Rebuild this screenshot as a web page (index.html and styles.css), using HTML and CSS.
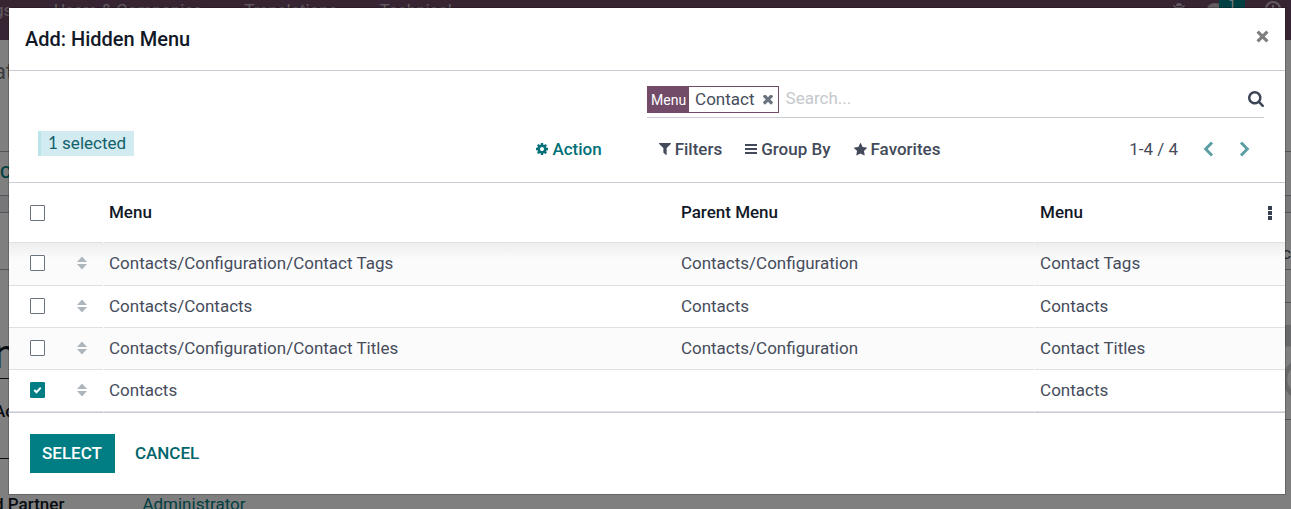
FILE: index.html
```html
<!DOCTYPE html>
<html lang="en">
<head>
<meta charset="utf-8">
<title>Add: Hidden Menu</title>
<link rel="stylesheet" href="styles.css">
</head>
<body>
<svg class="defs" aria-hidden="true">
  <symbol id="sort" viewBox="0 0 10 14"><path d="M5 0.500L10 6H0zM5 13.500L0 8H10z"/></symbol>
</svg>

<div class="page" aria-hidden="true">
  <div class="navbar">
    <span class="nav-brand">gs</span>
    <span class="nav-item">Users &amp; Companies</span>
    <span class="nav-item">Translations</span>
    <span class="nav-item">Technical</span>
    <span class="systray">
      <svg class="nav-icon" viewBox="0 0 16 16"><path d="M5 5a3 3 0 0 1 6 0zM2 5l3 3H11l3-3-1-1-2 2H5L3 4zM4 8h8v4a4 4 0 0 1-8 0z"/></svg>
      <span class="chat"><svg class="nav-icon" viewBox="0 0 16 16"><ellipse cx="8" cy="8" rx="8" ry="6"/></svg><span class="count">1</span></span>
      <svg class="nav-icon ring" viewBox="0 0 16 16"><circle cx="8" cy="8" r="7"/><path d="M8 4v4h3"/></svg>
    </span>
  </div>
  <div class="crumb">at</div>
  <div class="toolbar">C</div>
  <div class="band"></div>
  <div class="statusbar"><span>c</span></div>
  <div class="record">
    <div class="fields">
      <div class="record-name">n</div>
      <div class="field-label">Ac</div>
      <div class="partner"><b>d Partner</b><span>Administrator</span></div>
    </div>
    <div class="avatar">
      <svg viewBox="0 0 40 117"><path d="M0 22h40v22H0z"/><circle cx="52" cy="77" r="18"/></svg>
    </div>
  </div>
</div>

<div class="backdrop">
  <div class="modal" role="dialog" aria-modal="true" aria-labelledby="title">
    <header class="modal-header">
      <h1 id="title">Add: Hidden Menu</h1>
      <button class="icon-btn close" aria-label="Close"><svg viewBox="0 0 12 12"><path d="M1.500 1.500l9 9M10.500 1.500l-9 9"/></svg></button>
    </header>

    <div class="control-panel">
      <div class="search">
        <span class="facet">
          <span class="facet-label">Menu</span>
          <span class="facet-value">Contact</span>
          <button class="icon-btn remove" aria-label="Remove"><svg viewBox="300 470 1192 1108"><path d="M1490 1322q0 40-28 68l-136 136q-28 28-68 28t-68-28l-294-294-294 294q-28 28-68 28t-68-28l-136-136q-28-28-28-68t28-68l294-294-294-294q-28-28-28-68t28-68l136-136q28-28 68-28t68 28l294 294 294-294q28-28 68-28t68 28l136 136q28 28 28 68t-28 68l-294 294 294 294q28 28 28 68z"/></svg></button>
        </span>
        <input class="search-input" type="text" placeholder="Search..." aria-label="Search">
        <button class="icon-btn magnifier" aria-label="Search"><svg viewBox="64 128 1664 1664"><path d="M1216 832q0-185-131.500-316.500t-316.500-131.500-316.500 131.500-131.500 316.500 131.500 316.500 316.500 131.500 316.500-131.500 131.500-316.500zm512 832q0 52-38 90t-90 38q-54 0-90-38l-343-342q-179 124-399 124-143 0-273.500-55.500t-225-150-150-225-55.500-273.500 55.500-273.500 150-225 225-150 273.500-55.500 273.500 55.500 225 150 150 225 55.500 273.500q0 220-124 399l343 343q37 37 37 90z"/></svg></button>
      </div>
      <div class="tools">
        <div class="tools-left">
          <span class="selection"><span class="digit">1</span> selected</span>
          <button class="tool action"><svg class="i12" viewBox="128 128 1536 1536"><path d="M1152 896q0-106-75-181t-181-75-181 75-75 181 75 181 181 75 181-75 75-181zm512-109v222q0 12-8 23t-20 13l-185 28q-19 54-39 91 35 50 107 138 10 12 10 25t-9 23q-27 37-99 108t-94 71q-12 0-26-9l-138-108q-44 23-91 38-16 136-29 186-7 28-36 28h-222q-14 0-24.500-8.500t-11.500-21.500l-28-184q-49-16-90-37l-141 107q-10 9-25 9-14 0-25-11-126-114-165-168-7-10-7-23 0-12 8-23 15-21 51-66.500t54-70.500q-27-50-41-99l-183-27q-13-2-21-12.500t-8-23.500v-222q0-12 8-23t19-13l186-28q14-46 39-92-40-57-107-138-10-12-10-24 0-10 9-23 26-36 98.500-107.500t94.500-71.500q13 0 26 10l138 107q44-23 91-38 16-136 29-186 7-28 36-28h222q14 0 24.500 8.500t11.500 21.500l28 184q49 16 90 37l142-107q9-9 24-9 13 0 25 10 129 119 165 170 7 8 7 22 0 12-8 23-15 21-51 66.500t-54 70.500q26 50 41 98l183 28q13 2 21 12.500t8 23.500z"/></svg>Action</button>
        </div>
        <div class="tools-right">
          <button class="tool"><svg class="i12" viewBox="190 256 1412 1412"><path d="M1595 295q17 41-14 70l-493 493v742q0 42-39 59-13 5-25 5-27 0-45-19l-256-256q-19-19-19-45v-486l-493-493q-31-29-14-70 17-39 59-39h1280q42 0 59 39z"/></svg>Filters</button>
          <button class="tool"><svg class="i12" viewBox="0 0 12 12"><path d="M0 1h12v2H0zM0 5h12v2H0zM0 9h12v2H0z"/></svg>Group By</button>
          <button class="tool"><svg class="i13" viewBox="64 32 1664 1664"><path d="M1728 647q0 22-26 48l-363 354 86 500q1 7 1 20 0 21-10.500 35.500t-30.500 14.500q-19 0-40-12l-449-236-449 236q-22 12-40 12-21 0-31.500-14.500t-10.500-35.500q0-6 2-20l86-500-364-354q-25-27-25-48 0-37 56-46l502-73 225-455q19-41 49-41t49 41l225 455 502 73q56 9 56 46z"/></svg>Favorites</button>
          <div class="pager">
            <span>1-4 / 4</span>
            <button class="icon-btn chevron" aria-label="Previous"><svg viewBox="0 0 10 16"><path d="M8.500 1.500L2.200 8l6.300 6.500"/></svg></button>
            <button class="icon-btn chevron" aria-label="Next"><svg viewBox="0 0 10 16"><path d="M1.500 1.500L7.800 8l-6.300 6.500"/></svg></button>
          </div>
        </div>
      </div>
    </div>

    <div class="list">
      <table>
        <colgroup><col class="c-check"><col class="c-handle"><col class="c-menu"><col class="c-parent"><col class="c-name"><col class="c-opt"></colgroup>
        <thead>
          <tr>
            <th><input type="checkbox" aria-label="Select all"></th>
            <th></th><th class="split">Menu</th><th>Parent Menu</th><th class="split">Menu</th>
            <th class="opt"><button class="icon-btn kebab" aria-label="Optional columns"><svg viewBox="0 0 4 14"><path d="M0 0h4v4H0zM0 5h4v4H0zM0 10h4v4H0z"/></svg></button></th>
          </tr>
        </thead>
        <tbody>
          <tr><td><input type="checkbox" aria-label="Select Contact Tags"></td><td><svg class="sort"><use href="#sort"/></svg></td><td class="split">Contacts/Configuration/Contact Tags</td><td>Contacts/Configuration</td><td class="split">Contact Tags</td><td></td></tr>
          <tr><td><input type="checkbox" aria-label="Select Contacts/Contacts"></td><td><svg class="sort"><use href="#sort"/></svg></td><td class="split">Contacts/Contacts</td><td>Contacts</td><td class="split">Contacts</td><td></td></tr>
          <tr><td><input type="checkbox" aria-label="Select Contact Titles"></td><td><svg class="sort"><use href="#sort"/></svg></td><td class="split">Contacts/Configuration/Contact Titles</td><td>Contacts/Configuration</td><td class="split">Contact Titles</td><td></td></tr>
          <tr><td><span class="checked"><input type="checkbox" aria-label="Select Contacts" checked><svg viewBox="0 0 15 15"><path d="M4.300 7.500l2.200 2.300 4.200-4.600"/></svg></span></td><td><svg class="sort"><use href="#sort"/></svg></td><td class="split">Contacts</td><td></td><td class="split">Contacts</td><td></td></tr>
        </tbody>
      </table>
    </div>

    <footer class="modal-footer">
      <button class="btn primary">SELECT</button>
      <button class="btn">CANCEL</button>
    </footer>
  </div>
</div>
</body>
</html>
```

FILE: styles.css
```css
* { box-sizing: border-box; }

body {
  margin: 0;
  height: 100vh;
  overflow: hidden;
  font-family: Roboto, "Liberation Sans", sans-serif;
  font-size: 17px;
  line-height: 24px;
  color: #464c5b;
  background: #fff;
}

button, input { font: inherit; color: inherit; }
button { padding: 0; border: 0; background: none; cursor: pointer; }
svg { display: block; fill: currentColor; }
.defs { position: absolute; width: 0; height: 0; }

/* Page under the dialog */
.navbar {
  display: flex;
  align-items: flex-start;
  height: 40px;
  margin-left: -6px;
  padding-right: 10px;
  line-height: 20px;
  background: #714b67;
  color: #c4b7c1;
}
.nav-brand { width: 60px; }
.nav-item { margin-right: 42px; }
.systray { display: flex; gap: 20px; margin-left: auto; }
.nav-icon { width: 16px; height: 16px; margin-top: 1px; }
.chat { display: flex; }
.count {
  width: 26px;
  height: 16px;
  margin-left: -4px;
  font-size: 12px;
  line-height: 8px;
  text-align: center;
  color: #fff;
  background: #017e84;
}
.ring { fill: none; stroke: currentColor; stroke-width: 2; }
.crumb { height: 112px; margin-left: -6px; padding-top: 20px; border-bottom: 1px solid #ababb3; font-size: 22px; color: #6c757d; }
.toolbar { height: 44px; padding-top: 8px; border-bottom: 1px solid #ababb3; font-weight: 500; color: #017e84; }
.band { height: 17px; border-bottom: 1px solid #ababb3; background: #eeeef4; }
.statusbar { height: 57px; padding: 28px 0 0; text-align: right; border-bottom: 1px solid #ababb3; }
.record { display: flex; justify-content: space-between; }
.fields { flex: 1; margin-left: -6px; color: #111827; }
.record-name { height: 109px; max-width: 60%; padding-top: 73px; border-bottom: 1px solid #111827; font-size: 40px; }
.field-label { height: 80px; max-width: 60%; padding-top: 20px; border-bottom: 1px solid #111827; font-weight: 500; }
.partner { display: flex; gap: 78px; padding-top: 33px; color: #017e84; }
.partner b { font-weight: 500; color: #111827; }
.avatar { width: 40px; height: 150px; padding-top: 32px; border-bottom: 1px solid #ababb3; }
.avatar svg { width: 40px; height: 117px; border-top: 1px solid #ababb3; fill: #ced0d4; }
.avatar circle { fill: none; stroke: #ced0d4; stroke-width: 5; }

/* Dialog */
.backdrop {
  position: fixed;
  inset: 0;
  padding: 7px 5px 0 8px;
  background: rgba(0, 0, 0, .5);
}
.modal {
  border: 1px solid rgba(0, 0, 0, .2);
  background: #fff;
  background-clip: padding-box;
}
.modal-header {
  display: flex;
  align-items: center;
  justify-content: space-between;
  height: 63px;
  padding: 0 16px;
  border-bottom: 1px solid #c9ccd2;
}
h1 { margin: 0; font-size: 20px; line-height: 30px; font-weight: 500; color: #111827; }
.close { color: #7f7f7f; }
.close svg { width: 13px; height: 13px; margin-bottom: 5px; fill: none; stroke: currentColor; stroke-width: 3; }

.control-panel { height: 112px; padding: 11px 21px 0; border-bottom: 1px solid #c9ccd2; }
.search {
  display: flex;
  align-items: center;
  width: 50%;
  height: 36px;
  margin-left: auto;
  border-bottom: 1px solid #c9ccd2;
}
.facet {
  display: flex;
  align-items: center;
  height: 27px;
  margin-right: 7px;
  padding-right: 5px;
  border: 1px solid #714b67;
}
.facet-label { align-self: stretch; padding: 0 3px; font-size: 14px; line-height: 26px; color: #fff; background: #714b67; }
.facet-value { padding: 0 8px 2px 6px; }
.remove svg { width: 10px; height: 10px; color: #6b7280; }
.search-input { flex: 1; min-width: 0; padding: 0 0 4px; border: 0; outline: 0; background: none; }
.search-input::placeholder { color: #c5c8cc; opacity: 1; }
.magnifier svg { width: 16px; height: 16px; margin-bottom: 2px; color: #3d4555; }

.tools { display: flex; align-items: flex-start; padding-top: 13px; }
.tools-left { display: flex; justify-content: space-between; width: 46%; padding-left: 8px; }
.selection {
  height: 25px;
  padding: 0 8px 0 7px;
  border-left: 3px solid #b8e4ea;
  background: #d1ebf0;
  color: #13606a;
}
.digit { font-family: Lato, sans-serif; }
.tool { display: flex; align-items: center; gap: 4px; height: 36px; font-weight: 500; color: #434a5a; }
.action { margin-right: -4px; color: #017078; }
.i12 { width: 12px; height: 12px; }
.i13 { width: 13px; height: 13px; }
.tools-right { display: flex; flex: 1; gap: 23px; padding-left: 61px; }
.pager { display: flex; align-items: center; height: 36px; margin-left: auto; padding-right: 14px; }
.chevron { margin-left: 25px; color: #5c9ea3; }
.chevron svg { width: 11px; height: 16px; fill: none; stroke: currentColor; stroke-width: 3; }

.list { background: #fff; border-bottom: 1px solid #c9ccd2; }
table { width: 100%; table-layout: fixed; border-collapse: separate; border-spacing: 0; }
.c-check { width: 62px; }
.c-handle { width: 32px; }
.c-parent { width: 28.15%; }
.c-name { width: 17%; }
.c-opt { width: 34px; }
th, td { padding: 0 6px 2px; text-align: left; white-space: nowrap; border-bottom: 1px solid #dee0e3; }
th { height: 60px; font-weight: 500; color: #111827; }
td { height: 42px; }
th:first-child, td:first-child { padding-left: 21px; }
th:first-child { padding-bottom: 0; }
tbody tr:nth-child(odd) { background: #fbfbfb; }
tbody tr:first-child td { height: 43px; }
tbody tr:first-child { background: linear-gradient(#eeeeef, #fbfbfb 16px); }

/* Column starts leave a one-pixel break in the row rule */
th.split, td.split {
  padding-bottom: 3px;
  border-bottom: 0;
  background: linear-gradient(#dee0e3, #dee0e3) right bottom / calc(100% - 1px) 1px no-repeat;
}

input[type="checkbox"] {
  display: block;
  appearance: none;
  width: 15px;
  height: 16px;
  margin: 0;
  border: 1px solid #6b7280;
  border-radius: 1px;
  background: #fff;
}
input[type="checkbox"]:checked { border-color: #017e84; background: #017e84; }
.checked { display: grid; width: 15px; }
.checked > * { grid-area: 1 / 1; }
.checked svg { z-index: 1; width: 15px; height: 16px; fill: none; stroke: #fff; stroke-width: 2; pointer-events: none; }
.sort { width: 10px; height: 14px; color: #adb5bd; }
.opt { text-align: right; padding-right: 13px; }
.kebab { vertical-align: middle; color: #374151; }
.kebab svg { width: 4px; height: 14px; }

.modal-footer { display: flex; align-items: center; gap: 8px; height: 81px; padding: 0 21px; }
.btn { height: 39px; padding: 0 13px 2px 12px; font-weight: 500; color: #01666b; }
.primary { color: #fff; background: #017e84; }
```
